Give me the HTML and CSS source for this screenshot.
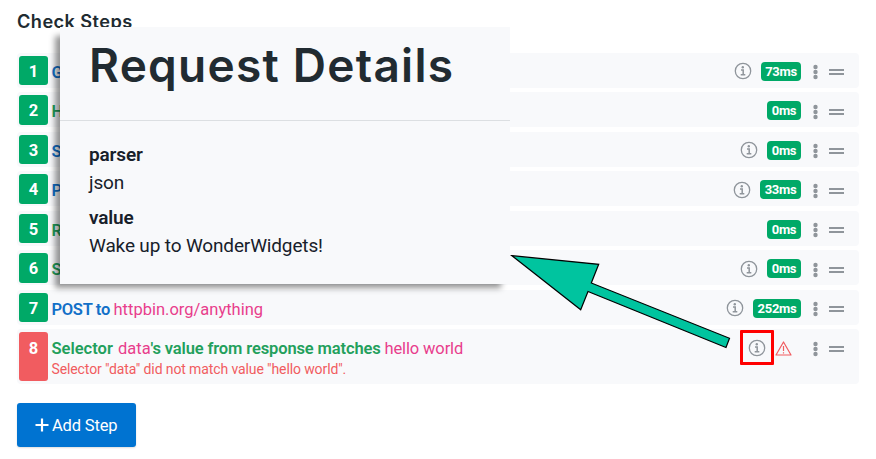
FILE: index.html
```html
<!DOCTYPE html>
<html lang="en">
<head>
<meta charset="utf-8">
<title>Check Steps</title>
<link rel="stylesheet" href="styles.css">
</head>
<body>
<svg class="defs" width="0" height="0" aria-hidden="true">
  <symbol id="info" viewBox="0 0 18 18"><circle cx="9" cy="9" r="7.7" fill="none" stroke="currentColor" stroke-width="1.3"/><circle cx="8.8" cy="5.3" r="1.2" fill="currentColor"/><path d="M7 8h2.200v4.700M6.700 12.800h4.600" fill="none" stroke="currentColor" stroke-width="1.500"/></symbol>
  <symbol id="dots" viewBox="0 0 5 16"><circle cx="2.5" cy="3" r="2.2"/><circle cx="2.5" cy="8" r="2.2"/><circle cx="2.5" cy="13" r="2.2"/></symbol>
  <symbol id="drag" viewBox="0 0 15 6"><path d="M0 0h15v2H0zM0 4h15v2H0z"/></symbol>
</svg>
<main class="page">
  <h1 class="title">Check Steps</h1>
  <ol class="steps">
    <li class="step"><span class="num">1</span><div class="body"><b class="blue">GET</b></div><div class="tools"><svg class="info"><use href="#info"/></svg><span class="time w40">73ms</span><svg class="dots"><use href="#dots"/></svg><svg class="drag"><use href="#drag"/></svg></div></li>
    <li class="step"><span class="num">2</span><div class="body"><b class="green">Header</b></div><div class="tools"><span class="time">0ms</span><svg class="dots"><use href="#dots"/></svg><svg class="drag"><use href="#drag"/></svg></div></li>
    <li class="step"><span class="num">3</span><div class="body"><b class="blue">Set</b></div><div class="tools"><svg class="info"><use href="#info"/></svg><span class="time">0ms</span><svg class="dots"><use href="#dots"/></svg><svg class="drag"><use href="#drag"/></svg></div></li>
    <li class="step"><span class="num">4</span><div class="body"><b class="blue">POST</b></div><div class="tools"><svg class="info"><use href="#info"/></svg><span class="time w41">33ms</span><svg class="dots"><use href="#dots"/></svg><svg class="drag"><use href="#drag"/></svg></div></li>
    <li class="step"><span class="num">5</span><div class="body"><b class="green">Res</b></div><div class="tools"><span class="time">0ms</span><svg class="dots"><use href="#dots"/></svg><svg class="drag"><use href="#drag"/></svg></div></li>
    <li class="step"><span class="num">6</span><div class="body"><b class="green">Sel</b></div><div class="tools"><svg class="info"><use href="#info"/></svg><span class="time">0ms</span><svg class="dots"><use href="#dots"/></svg><svg class="drag"><use href="#drag"/></svg></div></li>
    <li class="step"><span class="num">7</span><div class="body"><b class="blue post">POST to</b><span class="pink url">httpbin.org/anything</span></div><div class="tools"><svg class="info"><use href="#info"/></svg><span class="time w48">252ms</span><svg class="dots"><use href="#dots"/></svg><svg class="drag"><use href="#drag"/></svg></div></li>
    <li class="step failed"><span class="num">8</span><div class="body"><div class="line"><b class="green sel">Selector</b><span class="pink data">data</span><b class="green match">'s value from response matches</b><span class="pink hello">hello world</span></div><div class="error">Selector "data" did not match value "hello world".</div></div><div class="tools"><span class="marked"><svg class="info"><use href="#info"/></svg></span><svg class="warn" viewBox="0 0 17 15"><path d="M8.5 1 16 14H1z" fill="none" stroke="currentColor" stroke-width="1.2" stroke-linejoin="round"/><path d="M8.5 5v5M8.5 11.2v1.3" stroke="currentColor" stroke-width="1.2"/></svg><svg class="dots"><use href="#dots"/></svg><svg class="drag"><use href="#drag"/></svg></div></li>
  </ol>
  <button class="add"><svg viewBox="0 0 14 14"><path d="M7 .5v13M.5 7h13" stroke="currentColor" stroke-width="2.2"/></svg><span>Add Step</span></button>
</main>
<section class="details">
  <h2><span>Request Details</span></h2>
  <dl>
    <dt class="parser">parser</dt><dd class="json">json</dd>
    <dt class="value">value</dt><dd class="wake">Wake up to WonderWidgets!</dd>
  </dl>
</section>
<svg class="arrow" width="230" height="100" viewBox="510 252 230 100"><path d="M512 255.700 598.700 264.300 591.300 283 729.500 338.300 726 347.500 588 291.500 580.700 309.700z" fill="#00c49f" stroke="#000" stroke-width="1.2"/></svg>
</body>
</html>
```
FILE: styles.css
```css
* { box-sizing: border-box; }
body { margin: 0; width: 876px; height: 459px; overflow: hidden; background: #fff; font-family: Roboto, "Liberation Sans", sans-serif; position: relative; }
.defs { position: absolute; }
.page { padding: 10px 17px 0; }
.title { margin: 0; height: 43px; font-family: Inter, Roboto, sans-serif; font-size: 18.2px; line-height: 23px; font-weight: 600; color: #212b31; letter-spacing: 0.42px; white-space: nowrap; }
.steps { list-style: none; margin: 0; padding: 0; display: flex; flex-direction: column; gap: 4.7px; }
.step { display: flex; height: 34.8px; padding: 2.7px 15px 2.5px 2px; background: #f8f9fb; border-radius: 4px; }
.failed { height: 54.2px; }
.num { width: 29px; height: 100%; border-radius: 3px; background: #00a967; color: #fff; font-size: 16.5px; font-weight: 700; line-height: 32px; text-align: center; }
.failed .num { background: #f15c60; line-height: 33px; }
.body { flex: 1; margin-left: 3.5px; font-size: 16.5px; line-height: 33px; white-space: nowrap; }
.failed .line { height: 32px; line-height: 33px; }
b { font-weight: 600; }
.body b, .body span { display: inline-block; }
.blue { color: #1270c8; }
.green { color: #23a05c; }
.pink { color: #e83e8c; }
.post { width: 62px; letter-spacing: -0.3px; }
.sel { width: 66.5px; }
.data { width: 32.5px; }
.match { width: 234px; letter-spacing: -0.12px; }
.hello { letter-spacing: -0.13px; }
.error { font-size: 14px; line-height: 18px; margin-top: -4px; color: #f15c60; letter-spacing: -0.11px; }
.tools { display: flex; height: 31px; align-items: center; color: #8f959b; }
.tools svg { fill: currentColor; }
.info { width: 18px; height: 18px; margin-right: 9px; }
.time { width: 34px; height: 19px; border-radius: 4px; background: #00a967; color: #fff; font-size: 13px; font-weight: 700; line-height: 20px; text-align: center; letter-spacing: -0.3px; }
.w40 { width: 40px; }
.w41 { width: 41px; }
.w48 { width: 48px; }
.dots { width: 5px; height: 16px; margin: 2px 0 0 11.5px; }
.drag { width: 15px; height: 6px; margin: 2px 0 0 11.5px; }
.marked { width: 34px; height: 35px; border: 3px solid #f00; border-radius: 1px; display: grid; place-items: center; }
.marked .info { margin: 0; }
.tools .warn { width: 17px; height: 15px; color: #f15c60; fill: none; margin: 2px 9.5px 0 0.5px; }
.add { display: flex; align-items: center; gap: 3px; width: 119px; height: 44px; margin-top: 19px; padding: 0 0 0 18px; border: 0; border-radius: 3px; background: #0073d1; box-shadow: 0 1px 2px #0002; color: #fff; font: 400 16.5px Roboto, sans-serif; letter-spacing: -0.15px; white-space: nowrap; }
.add span { padding-top: 2px; }
.add svg { width: 14px; height: 14px; }
.details { position: absolute; z-index: 1; left: 60px; top: 27px; width: 450px; height: 257px; color: #17202a; white-space: nowrap; }
.details::before { content: ""; position: absolute; inset: 5px 4px 0 0; box-shadow: -5px 4px 6px rgba(0,0,0,.42); z-index: -1; }
.details h2, .details dl { background: #f8f9fb; }
.details h2 { height: 94px; margin: 0; padding: 9px 0 0 29px; border-bottom: 1px solid #dcdfe2; font-family: Inter, Roboto, sans-serif; font-size: 46px; line-height: 58px; font-weight: 600; color: #212b31; letter-spacing: 1.25px; }
.details dl { height: 163px; margin: 0; padding: 20px 0 0 29px; font-size: 19px; line-height: 28px; letter-spacing: -0.15px; }
.details dt { font-weight: 600; }
.details dd { margin: 0 0 7px; }
.arrow { position: absolute; z-index: 2; left: 510px; top: 252px; }
```
